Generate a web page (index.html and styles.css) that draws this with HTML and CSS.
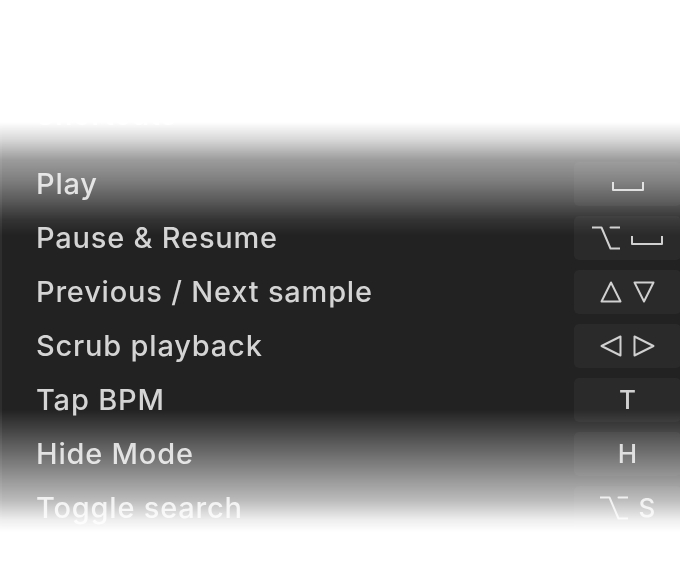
FILE: index.html
```html
<!DOCTYPE html>
<html>
<head>
<meta charset="utf-8">
<link rel="stylesheet" href="styles.css">
</head>
<body>
<div class="panel">
  <h2 class="heading">Shortcuts</h2>
  <ul class="list">
    <li class="row">
      <span class="label">Play</span>
      <span class="key">
        <svg class="g-space" width="32" height="9" viewBox="0 0 32 9"><path d="M1 0V8H31V0"/></svg>
      </span>
    </li>
    <li class="row">
      <span class="label">Pause &amp; Resume</span>
      <span class="key">
        <svg class="g-opt" width="28" height="24" viewBox="0 0 28 24"><path d="M0 1.5H9.5L18.5 22.5H28M18.5 1.5H28"/></svg>
        <svg class="g-space" width="32" height="9" viewBox="0 0 32 9"><path d="M1 0V8H31V0"/></svg>
      </span>
    </li>
    <li class="row">
      <span class="label">Previous / Next sample</span>
      <span class="key">
        <svg width="22" height="22" viewBox="0 0 22 22"><path d="M11 1.5L20.5 20.5H1.5Z"/></svg>
        <svg width="22" height="22" viewBox="0 0 22 22"><path d="M11 20.5L20.5 1.5H1.5Z"/></svg>
      </span>
    </li>
    <li class="row">
      <span class="label">Scrub playback</span>
      <span class="key">
        <svg width="22" height="22" viewBox="0 0 22 22"><path d="M1.5 11L20.5 1.5V20.5Z"/></svg>
        <svg width="22" height="22" viewBox="0 0 22 22"><path d="M20.5 11L1.5 1.5V20.5Z"/></svg>
      </span>
    </li>
    <li class="row">
      <span class="label">Tap BPM</span>
      <span class="key"><span class="letter">T</span></span>
    </li>
    <li class="row">
      <span class="label">Hide Mode</span>
      <span class="key"><span class="letter">H</span></span>
    </li>
    <li class="row">
      <span class="label">Toggle search</span>
      <span class="key">
        <svg class="g-opt" width="28" height="24" viewBox="0 0 28 24"><path d="M0 1.5H9.5L18.5 22.5H28M18.5 1.5H28"/></svg>
        <span class="letter">S</span>
      </span>
    </li>
  </ul>
</div>
</body>
</html>
```

FILE: styles.css
```css
html, body {
  margin: 0;
  padding: 0;
  background: #ffffff;
}

body {
  width: 680px;
  height: 582px;
  overflow: hidden;
  font-family: Inter, "Liberation Sans", sans-serif;
}

.panel {
  height: 582px;
  box-sizing: border-box;
  padding-top: 88px;
  background: #222222;
  border-left: 2px solid #2e2e2e;
  color: #d6d6d6;
  -webkit-mask-image: linear-gradient(to bottom,
    rgba(0,0,0,0) 0px,
    rgba(0,0,0,0) 122px,
    rgba(0,0,0,0.18) 140px,
    rgba(0,0,0,0.45) 160px,
    rgba(0,0,0,0.58) 180px,
    rgba(0,0,0,0.74) 200px,
    rgba(0,0,0,0.92) 220px,
    rgba(0,0,0,1) 235px,
    rgba(0,0,0,1) 410px,
    rgba(0,0,0,0.77) 440px,
    rgba(0,0,0,0.54) 470px,
    rgba(0,0,0,0.31) 500px,
    rgba(0,0,0,0.08) 520px,
    rgba(0,0,0,0) 532px);
  mask-image: linear-gradient(to bottom,
    rgba(0,0,0,0) 0px,
    rgba(0,0,0,0) 122px,
    rgba(0,0,0,0.18) 140px,
    rgba(0,0,0,0.45) 160px,
    rgba(0,0,0,0.58) 180px,
    rgba(0,0,0,0.74) 200px,
    rgba(0,0,0,0.92) 220px,
    rgba(0,0,0,1) 235px,
    rgba(0,0,0,1) 410px,
    rgba(0,0,0,0.77) 440px,
    rgba(0,0,0,0.54) 470px,
    rgba(0,0,0,0.31) 500px,
    rgba(0,0,0,0.08) 520px,
    rgba(0,0,0,0) 532px);
}

.heading {
  margin: 0 0 15px 0;
  padding-left: 34px;
  height: 54px;
  line-height: 54px;
  font-size: 28px;
  font-weight: 600;
  letter-spacing: 1px;
  color: #ffffff;
}

.list {
  list-style: none;
  margin: 0;
  padding: 0;
}

.row {
  height: 54px;
  display: flex;
  align-items: center;
  justify-content: space-between;
  padding-left: 34px;
}

.label {
  font-size: 29px;
  font-weight: 500;
  letter-spacing: 0.8px;
  padding-bottom: 2px;
  color: #d4d4d4;
}

.key {
  width: 107px;
  height: 44px;
  margin-right: -1px;
  box-sizing: border-box;
  border-radius: 5px;
  background: #2a2a2a;
  display: flex;
  align-items: center;
  justify-content: center;
  gap: 11px;
  color: #d0d0d0;
}

.key svg {
  fill: none;
  stroke: currentColor;
  stroke-width: 2;
  stroke-linejoin: round;
  stroke-linecap: round;
}

.key .g-space {
  margin-top: 4px;
}

.letter {
  font-size: 26px;
  line-height: 1;
  font-weight: 500;
}
```
